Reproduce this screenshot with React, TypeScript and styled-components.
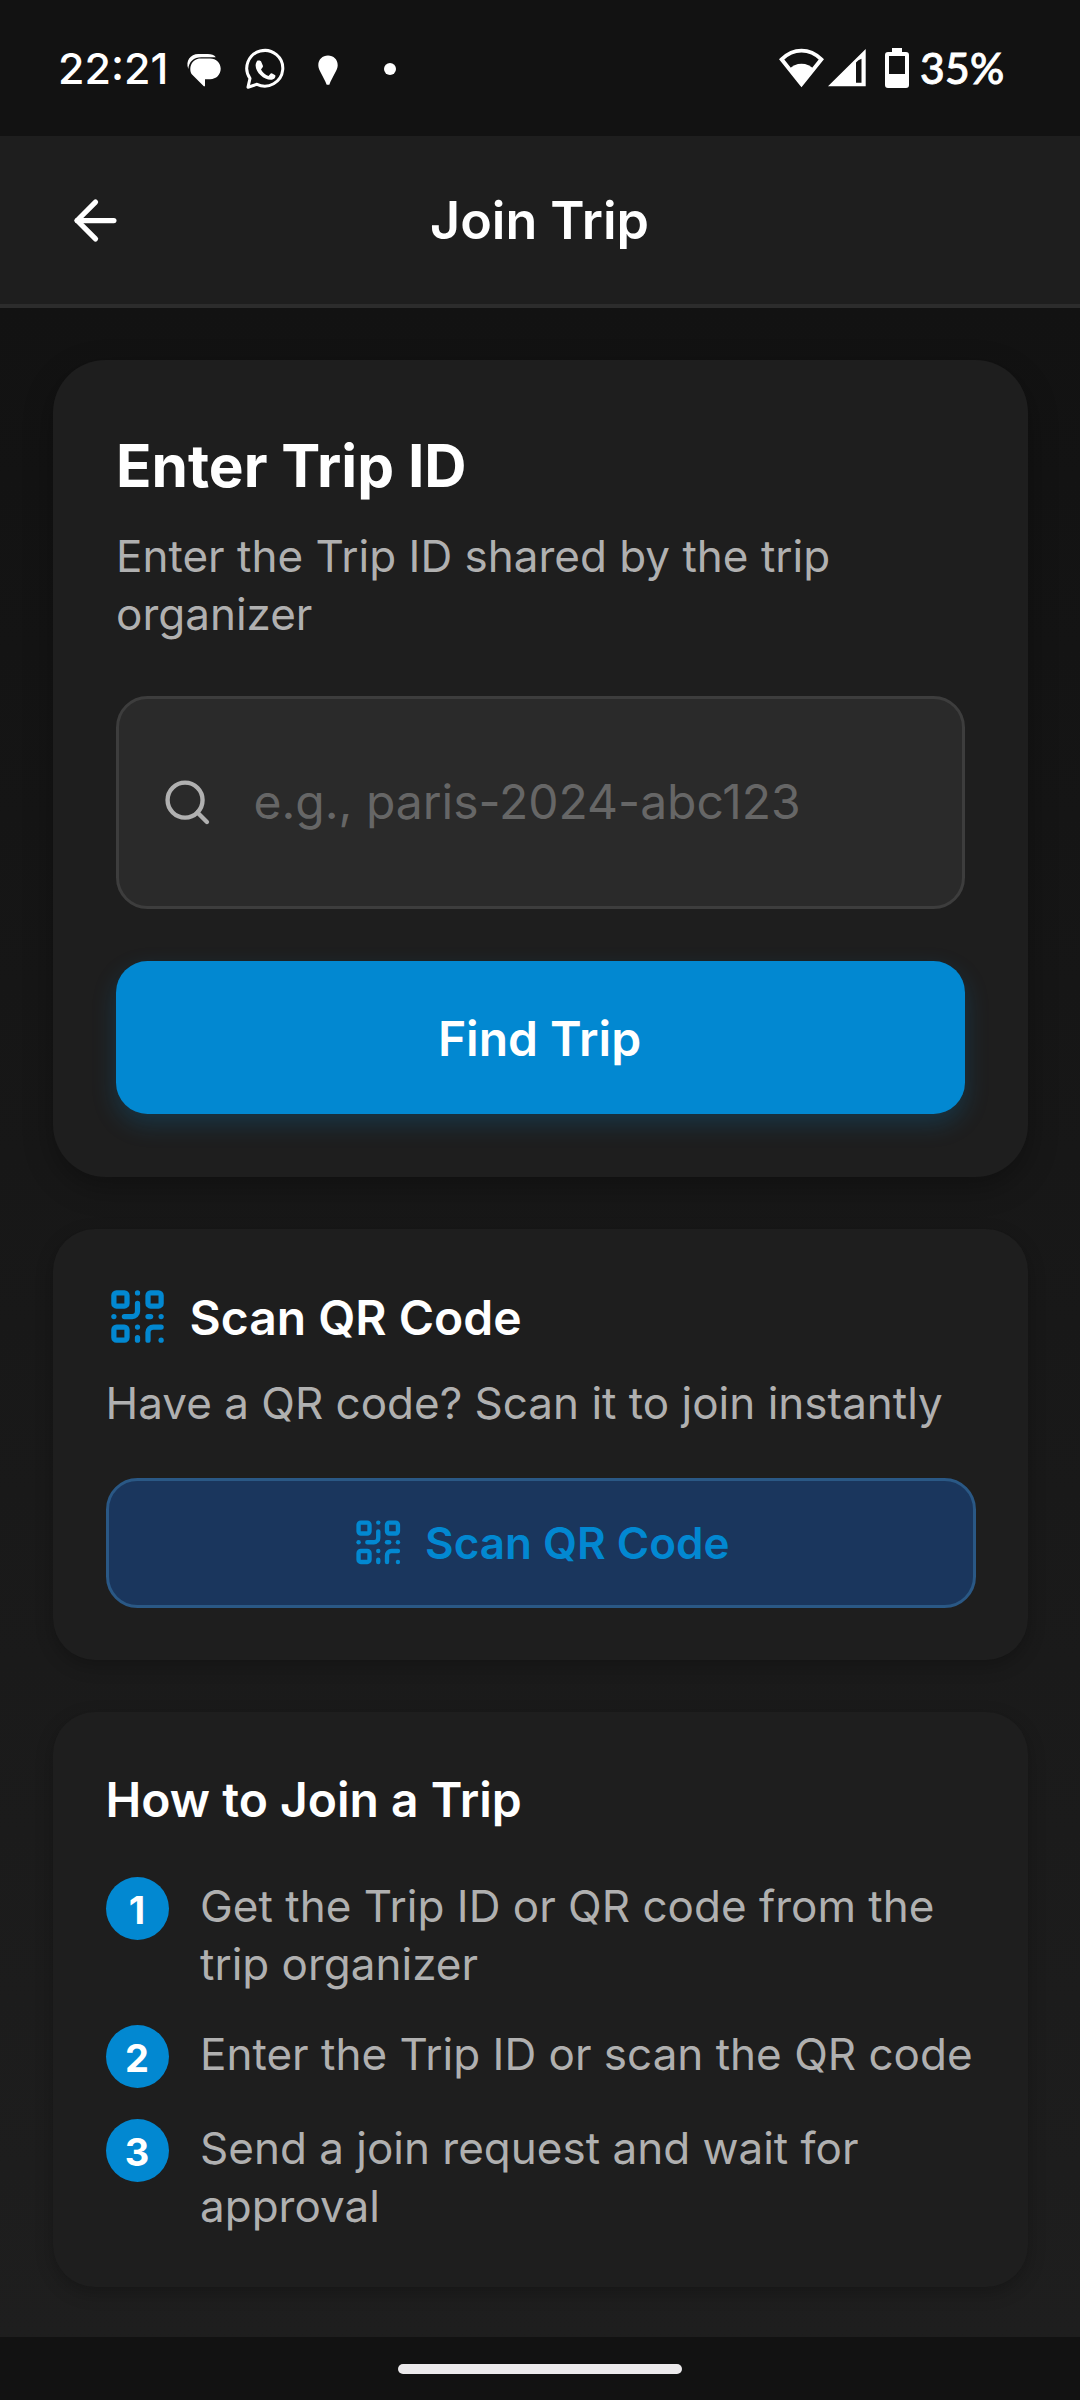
import React from 'react';
import styled, { createGlobalStyle } from 'styled-components';
import { ArrowLeft, QrCode, Search } from 'lucide-react';

const GlobalStyle = createGlobalStyle`
  * { box-sizing: border-box; }
  html, body { margin: 0; padding: 0; background: #121212; }
  body { font-family: Inter, Roboto, sans-serif; }
  h1, h2, p, ol { margin: 0; padding: 0; }
  button { font: inherit; border: 0; padding: 0; background: none; }
`;

const Screen = styled.div`
  width: 1080px;
  height: 2400px;
  display: flex;
  flex-direction: column;
  background: #121212;
  overflow: hidden;
`;

const StatusBar = styled.div`
  height: 136px;
  flex: none;
  display: flex;
  justify-content: space-between;
  padding: 0 76px 0 58px;
  color: #fff;
`;

const StatusGroup = styled.div`
  display: flex;
  align-items: center;
  height: 136px;
`;

const Clock = styled.span`
  width: 122px;
  white-space: nowrap;
  font-size: 43px;
  font-weight: 500;
  line-height: 52px;
`;

const Battery = styled.span`
  width: 84px;
  margin-left: 10px;
  white-space: nowrap;
  font-family: Lato, Roboto, sans-serif;
  font-size: 42.5px;
  font-weight: 500;
  line-height: 52px;
  letter-spacing: 0.4px;
  -webkit-text-stroke: 0.9px #fff;
`;

const Header = styled.header`
  height: 172px;
  flex: none;
  display: grid;
  grid-template-columns: 63px 1fr 63px;
  align-items: center;
  padding: 0 65px 0 64px;
  background: #1e1e1e;
  border-bottom: 4px solid #2c2c2c;
`;

const BackButton = styled.button`
  display: flex;
  color: #fff;
`;

const HeaderTitle = styled.h1`
  padding-top: 2px;
  text-align: center;
  color: #fff;
  font-size: 52px;
  font-weight: 600;
  line-height: 64px;
`;

const Content = styled.main`
  flex: 1;
  display: flex;
  flex-direction: column;
  gap: 52px;
  padding: 52px 52px 0 53px;
  background: linear-gradient(#121212, #1e1e1e);
`;

const Card = styled.section<{ $large?: boolean; $height: number }>`
  height: ${(p) => p.$height}px;
  flex: none;
  display: flex;
  flex-direction: column;
  padding: ${(p) => (p.$large ? 63 : 52.5)}px;
  border-radius: ${(p) => (p.$large ? 52.5 : 42)}px;
  background: #1e1e1e;
  box-shadow: ${(p) =>
    p.$large ? '0 10px 30px rgba(0, 0, 0, 0.3)' : '0 6px 18px rgba(0, 0, 0, 0.24)'};
`;

const LargeTitle = styled.h2`
  padding-top: 1px;
  color: #fff;
  font-size: 58.5px;
  font-weight: 700;
  line-height: 84px;
`;

const Title = styled.h2`
  color: #fff;
  font-size: 48px;
  font-weight: 600;
  line-height: 70px;
`;

const Body = styled.p<{ $top?: number }>`
  margin-top: ${(p) => p.$top ?? 0}px;
  color: #b0b0b0;
  font-size: 44px;
  line-height: 58px;
`;

const Field = styled.label`
  display: flex;
  align-items: center;
  gap: 40px;
  height: 213px;
  margin-top: 53px;
  padding: 0 42px;
  border: 3px solid #3d3d3d;
  border-radius: 31.5px;
  background: #2a2a2a;
  color: #b0b0b0;
`;

const FieldInput = styled.input`
  flex: 1;
  min-width: 0;
  padding: 0 0 2px;
  border: 0;
  outline: 0;
  background: none;
  color: #fff;
  font: 400 48px/64px Inter, sans-serif;
  &::placeholder { color: #666; opacity: 1; }
`;

const PrimaryButton = styled.button`
  height: 153px;
  margin-top: 52px;
  padding: 2px 2px 0 0;
  border-radius: 31.5px;
  background: #0288d1;
  color: #fff;
  font-size: 48px;
  font-weight: 600;
  box-shadow: 0 10px 24px rgba(2, 136, 209, 0.22);
`;

const TitleRow = styled.div`
  display: flex;
  align-items: center;
  gap: 21px;
  height: 70px;
  color: #0288d1;
  ${Title} { padding-top: 2px; }
`;

const ScanButton = styled.button`
  display: flex;
  align-items: center;
  justify-content: center;
  gap: 21px;
  height: 132px;
  margin-top: 46px;
  border: 3px solid #2a5885;
  border-radius: 31.5px;
  background: #1a365d;
  color: #0288d1;
  font-size: 44px;
  font-weight: 600;
`;

const Steps = styled.ol`
  display: flex;
  flex-direction: column;
  gap: 31.5px;
  margin-top: 42.5px;
  list-style: none;
`;

const Step = styled.li`
  display: flex;
  align-items: flex-start;
  gap: 31.5px;
`;

const StepNumber = styled.span`
  width: 63px;
  height: 63px;
  flex: none;
  border-radius: 50%;
  background: #0288d1;
  color: #fff;
  font-size: 38px;
  font-weight: 700;
  line-height: 66px;
  text-align: center;
`;

const NavBar = styled.footer`
  height: 63px;
  flex: none;
  display: flex;
  justify-content: center;
  align-items: flex-start;
  padding-top: 27px;
  background: #121212;
`;

const NavPill = styled.div`
  width: 284px;
  height: 10px;
  border-radius: 5px;
  background: #eceaec;
`;

const steps = [
  'Get the Trip ID or QR code from the trip organizer',
  'Enter the Trip ID or scan the QR code',
  'Send a join request and wait for approval',
];

const NotificationIcons = () => (
  <svg width="220" height="60" viewBox="180 38 220 60" fill="#fff">
    <path d="M188.300 69c-3-8 2-15 10-15h9.500c3.500 0 6.500 1.200 8 3.200h-14.500c-7.500 0-12.500 4.500-13 11.800Z" />
    <path d="M200.500 58.400h9.700c6 0 10.500 4.600 10.500 10.400s-4.500 10.400-10.500 10.400H205v7h-1.200L192 74.500c-4-6-.5-16.100 8.500-16.100Z" />
    <path
      d="M248 87.200l2-8.800a18 17.800 0 1 1 7 5.900Z"
      fill="none"
      stroke="#fff"
      strokeWidth="3"
      strokeLinejoin="round"
    />
    <path d="M257.500 60.500h2.200l1.300.8 2 4.700-.2 1-1.800 2.500c1.800 3.200 4.300 5.300 7.500 6.600l2.200-2.600 1-.2 3.600 1.900c.6 2.600-1.500 4.300-4.200 4.600-7 .2-15.300-6.800-15.500-14.200.1-2.200.8-4 1.900-5.100Z" />
    <path d="M328 55.600c5.500 0 9.700 4 9.700 9.600 0 5-5 10.500-8.400 19.600h-2.600c-3.400-9.100-8.400-14.600-8.400-19.600 0-5.600 4.200-9.600 9.700-9.600Z" />
    <circle cx="390" cy="69" r="6" />
  </svg>
);

const SystemIcons = () => (
  <svg width="132" height="60" viewBox="778 38 132 60" fill="#fff">
    <path
      d="M801.500 84.200 781.600 59.300c12-11.600 27.800-11.600 39.800 0Z"
      fill="none"
      stroke="#fff"
      strokeWidth="3.800"
    />
    <path d="M801.500 86 789 69.500c6-7.700 19-7.700 25 0Z" />
    <path fillRule="evenodd" d="M828 86.300 865.700 49v37.300ZM856 62.500v20.200h5.500V58.800q-3.500 1-5.500 3.700Z" />
    <path
      fillRule="evenodd"
      d="M892 48h10v4h4q3 0 3 3v30q0 3-3 3h-18q-3 0-3-3V55q0-3 3-3h4ZM889 56v18h16V56Z"
    />
  </svg>
);

export default function App() {
  return (
    <Screen>
      <GlobalStyle />
      <StatusBar>
        <StatusGroup>
          <Clock>22:21</Clock>
          <NotificationIcons />
        </StatusGroup>
        <StatusGroup>
          <SystemIcons />
          <Battery>35%</Battery>
        </StatusGroup>
      </StatusBar>
      <Header>
        <BackButton aria-label="Back">
          <ArrowLeft size={63} />
        </BackButton>
        <HeaderTitle>Join Trip</HeaderTitle>
      </Header>
      <Content>
        <Card $large $height={817}>
          <LargeTitle>Enter Trip ID</LargeTitle>
          <Body $top={19}>Enter the Trip ID shared by the trip organizer</Body>
          <Field>
            <Search size={52.5} />
            <FieldInput placeholder="e.g., paris-2024-abc123" />
          </Field>
          <PrimaryButton>Find Trip</PrimaryButton>
        </Card>
        <Card $height={431}>
          <TitleRow>
            <QrCode size={63} />
            <Title>Scan QR Code</Title>
          </TitleRow>
          <Body $top={22}>Have a QR code? Scan it to join instantly</Body>
          <ScanButton>
            <QrCode size={52.5} />
            Scan QR Code
          </ScanButton>
        </Card>
        <Card $height={575}>
          <Title>How to Join a Trip</Title>
          <Steps>
            {steps.map((step, i) => (
              <Step key={step}>
                <StepNumber>{i + 1}</StepNumber>
                <Body>{step}</Body>
              </Step>
            ))}
          </Steps>
        </Card>
      </Content>
      <NavBar>
        <NavPill />
      </NavBar>
    </Screen>
  );
}
